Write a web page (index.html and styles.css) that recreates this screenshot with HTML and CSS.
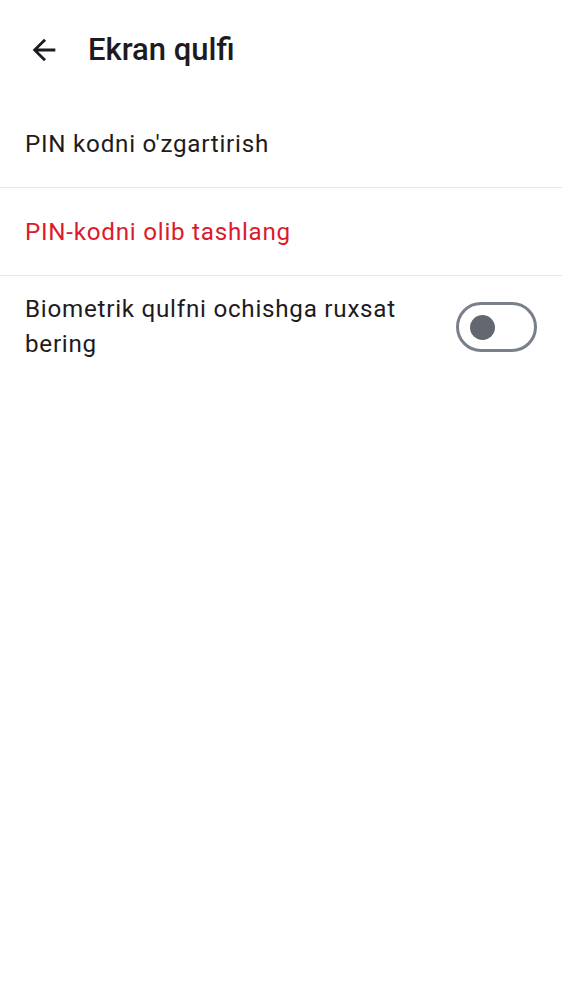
FILE: index.html
```html
<!DOCTYPE html>
<html>
<head>
<meta charset="utf-8">
<link rel="stylesheet" href="styles.css">
</head>
<body>
<div class="screen">
  <header class="topbar">
    <button class="back" aria-label="Back">
      <svg width="34" height="34" viewBox="0 0 24 24"><path d="M20 11H7.83l5.59-5.59L12 4l-8 8 8 8 1.41-1.41L7.83 13H20v-2z" fill="#1d1b20"/></svg>
    </button>
    <h1 class="title">Ekran qulfi</h1>
  </header>
  <ul class="list">
    <li class="item">PIN kodni o'zgartirish</li>
    <li class="item danger">PIN-kodni olib tashlang</li>
    <li class="item toggle-row">
      <span class="label">Biometrik qulfni ochishga ruxsat bering</span>
      <span class="switch"><span class="knob"></span></span>
    </li>
  </ul>
</div>
</body>
</html>
```
FILE: styles.css
```css
* { box-sizing: border-box; }
html, body { margin: 0; padding: 0; background: #fff; }
body { font-family: Roboto, "Noto Sans", sans-serif; color: #1d1b20; }
.screen { width: 562px; }
.topbar { display: flex; align-items: center; height: 100px; padding-left: 27px; }
.back { border: 0; background: none; padding: 0; width: 34px; height: 34px; display: flex; align-items: center; justify-content: center; margin-right: 27px; }
.back svg { display: block; }
.title { margin: 0; font-size: 31px; font-weight: 500; letter-spacing: 0; line-height: 40px; }
.list { list-style: none; margin: 0; padding: 0; }
.item { display: flex; align-items: center; min-height: 88px; padding: 2px 25px 0; font-size: 24.2px; letter-spacing: 0.75px; line-height: 34.5px; border-bottom: 1px solid #e7e6eb; }
.danger { color: #dc1a2c; }
.toggle-row { border-bottom: 0; justify-content: space-between; align-items: flex-start; padding-top: 16px; padding-right: 25px; }
.label { width: 410px; }
.switch { margin-top: 10px; width: 81px; height: 50px; border: 3px solid #7a8089; border-radius: 25px; display: flex; align-items: center; padding-left: 11px; flex-shrink: 0; }
.knob { width: 25px; height: 25px; border-radius: 50%; background: #636870; }
```
